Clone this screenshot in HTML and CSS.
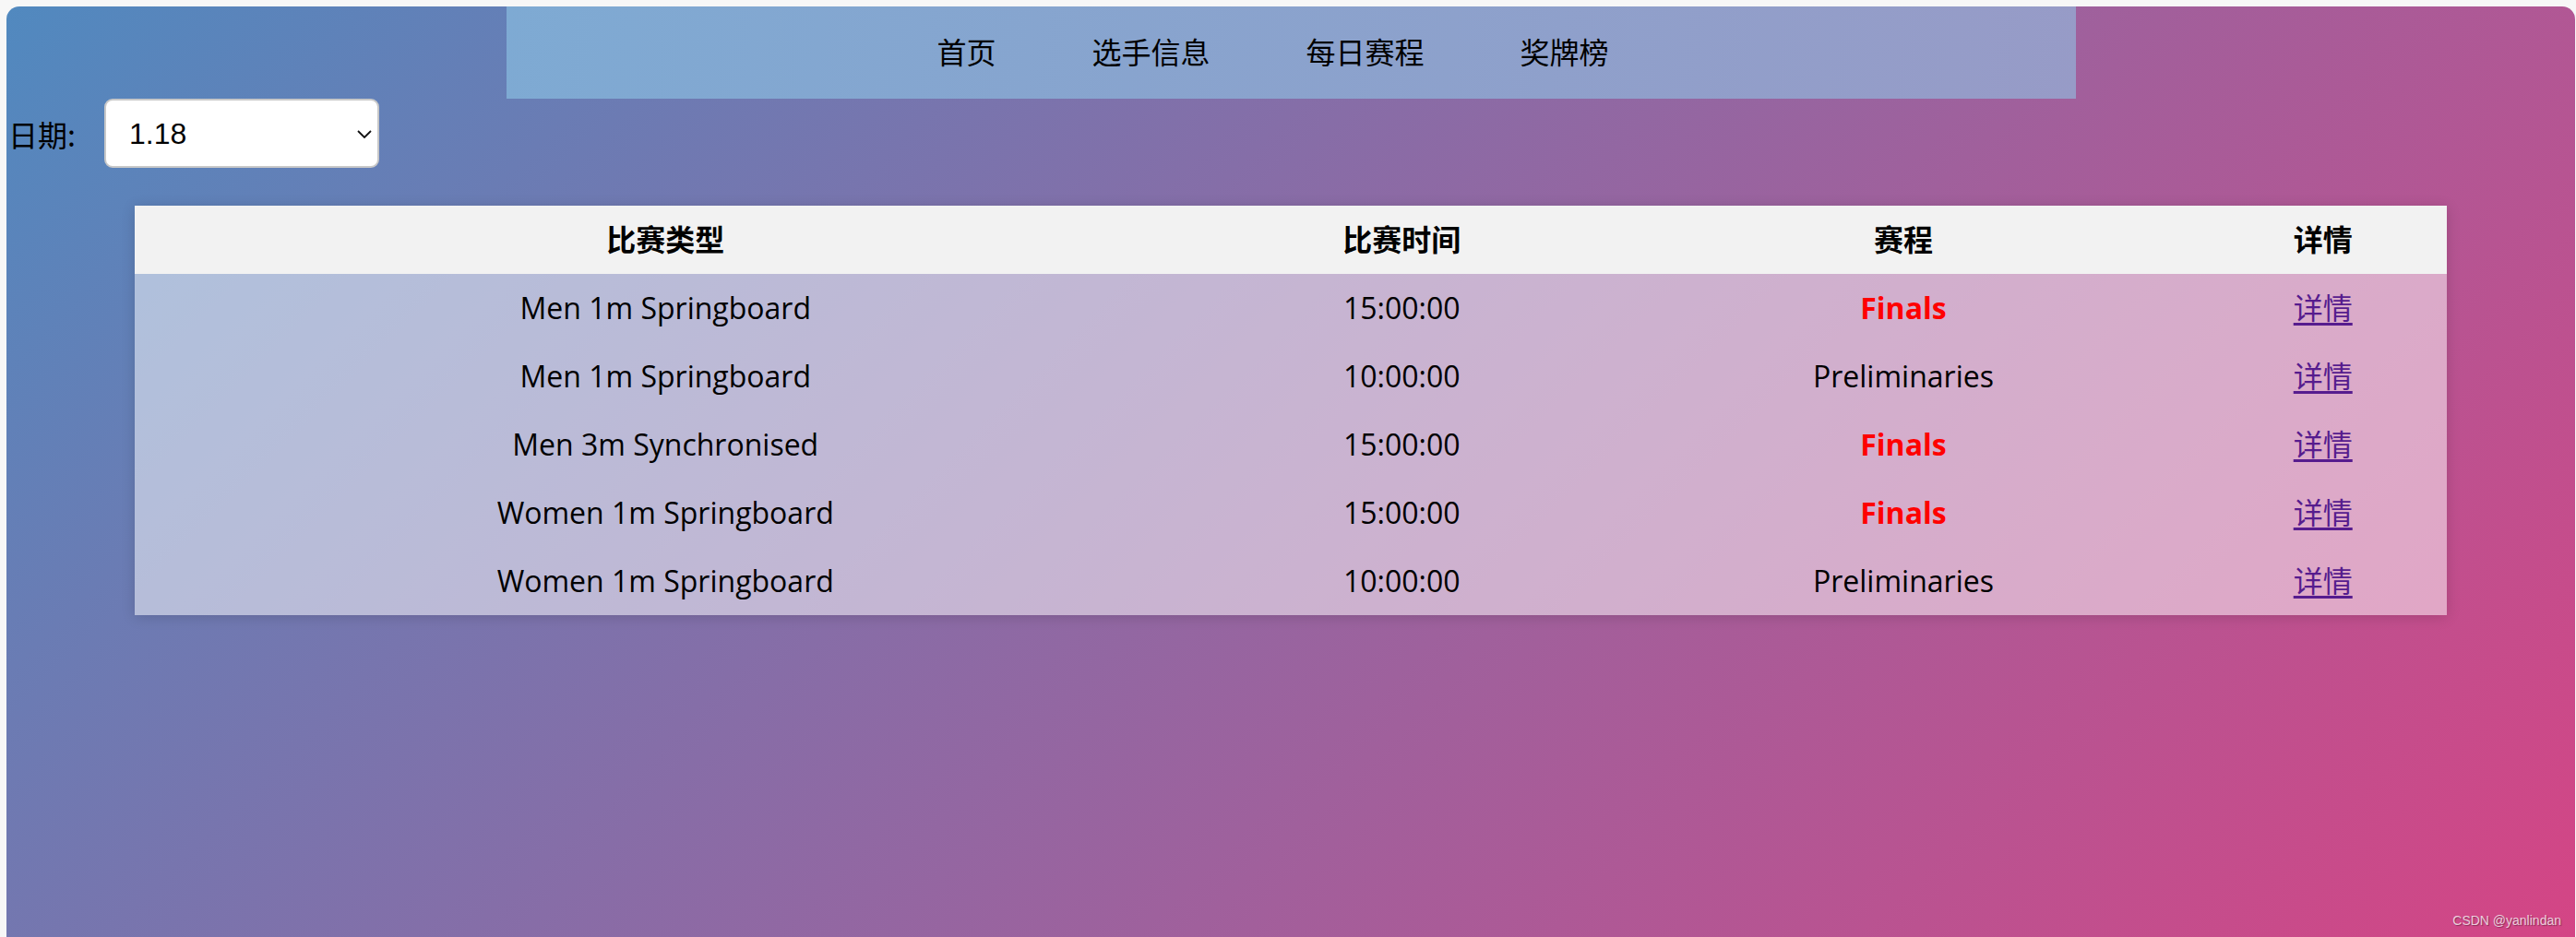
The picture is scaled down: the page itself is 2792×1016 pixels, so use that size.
FILE: index.html
```html
<!DOCTYPE html>
<html lang="zh-CN">
<head>
    <meta charset="UTF-8">
    <meta name="viewport" content="width=device-width, initial-scale=1.0">
    <title>每日赛程</title>
    <link rel="stylesheet" href="styles.css">
</head>
<body>

<div class="page">
    <nav class="nav">
        <a href="#">首页</a>
        <a href="#">选手信息</a>
        <a href="#">每日赛程</a>
        <a href="#">奖牌榜</a>
    </nav>

    <div class="filter">
        <label for="date">日期:</label>
        <div class="select-wrap">
            <select id="date">
                <option>1.18</option>
                <option>1.19</option>
                <option>1.20</option>
            </select>
            <svg class="chevron" viewBox="0 0 16 9" width="16" height="9">
                <path d="M1 1 L8 8 L15 1" fill="none" stroke="#111" stroke-width="1.8"/>
            </svg>
        </div>
    </div>

    <table class="schedule">
        <colgroup>
            <col class="col-type">
            <col class="col-time">
            <col class="col-stage">
            <col class="col-detail">
        </colgroup>
        <thead>
            <tr>
                <th>比赛类型</th>
                <th>比赛时间</th>
                <th>赛程</th>
                <th>详情</th>
            </tr>
        </thead>
        <tbody>
            <tr>
                <td>Men 1m Springboard</td>
                <td>15:00:00</td>
                <td class="final">Finals</td>
                <td><a href="#">详情</a></td>
            </tr>
            <tr>
                <td>Men 1m Springboard</td>
                <td>10:00:00</td>
                <td>Preliminaries</td>
                <td><a href="#">详情</a></td>
            </tr>
            <tr>
                <td>Men 3m Synchronised</td>
                <td>15:00:00</td>
                <td class="final">Finals</td>
                <td><a href="#">详情</a></td>
            </tr>
            <tr>
                <td>Women 1m Springboard</td>
                <td>15:00:00</td>
                <td class="final">Finals</td>
                <td><a href="#">详情</a></td>
            </tr>
            <tr>
                <td>Women 1m Springboard</td>
                <td>10:00:00</td>
                <td>Preliminaries</td>
                <td><a href="#">详情</a></td>
            </tr>
        </tbody>
    </table>

    <span class="watermark">CSDN @yanlindan</span>
</div>

</body>
</html>
```

FILE: styles.css
```css
html, body {
    margin: 0;
    height: 100%;
}
body {
    background-color: #f7f7f7;
    font-family: "Open Sans", "Noto Sans CJK SC", sans-serif;
    font-size: 32px;
    color: #000;
    overflow: hidden;
}
.page {
    position: relative;
    margin: 7px 1px 0 7px;
    height: 1009px;
    border-radius: 14px 14px 0 0;
    background: linear-gradient(135deg, #5189bf, #d44585);
    overflow: hidden;
}
.nav {
    display: flex;
    justify-content: center;
    align-items: center;
    gap: 104px;
    width: 1701px;
    height: 100px;
    margin: 0 auto;
    padding-right: 39px;
    box-sizing: border-box;
    background: linear-gradient(100deg, #7eaad3, #979bc7);
}
.nav a {
    color: #000;
    text-decoration: none;
    line-height: 46px;
}
.filter {
    display: flex;
    align-items: center;
    height: 75px;
}
.filter label {
    font-family: "Noto Sans CJK SC", sans-serif;
    margin-left: 2px;
    width: 104px;
}
.select-wrap {
    position: relative;
}
.select-wrap select {
    appearance: none;
    -webkit-appearance: none;
    width: 298px;
    height: 75px;
    padding: 0 0 0 25px;
    border: 2px solid #c8c8c8;
    border-radius: 9px;
    background-color: #fff;
    font-family: "Liberation Sans", Arial, sans-serif;
    font-size: 32px;
    color: #000;
}
.chevron {
    position: absolute;
    right: 8px;
    top: 34px;
    pointer-events: none;
}
.schedule {
    width: 90%;
    margin: 41px auto 0;
    border-collapse: collapse;
    table-layout: fixed;
    box-shadow: 0 2px 14px rgba(0, 0, 0, 0.15);
}
.col-type { width: 45.9%; }
.col-time { width: 17.8%; }
.col-stage { width: 25.6%; }
.col-detail { width: 10.7%; }
.schedule th,
.schedule td {
    padding: 14px 0;
    line-height: 46px;
    text-align: center;
    font-weight: normal;
}
.schedule th {
    background-color: #f2f2f2;
    font-weight: bold;
}
.schedule tbody tr {
    background-color: rgba(255, 255, 255, 0.5);
}
.schedule td {
    padding: 14px 0;
}
.schedule .final {
    color: #ff0000;
    font-weight: bold;
}
.schedule a {
    color: #561c8e;
    text-decoration: underline;
    text-underline-offset: 4px;
}
.watermark {
    position: absolute;
    right: 15px;
    bottom: 10px;
    font-family: "Liberation Sans", Arial, sans-serif;
    font-size: 14px;
    color: rgba(255, 255, 255, 0.75);
    text-shadow: 1px 1px 1px rgba(0, 0, 0, 0.35);
}
```
